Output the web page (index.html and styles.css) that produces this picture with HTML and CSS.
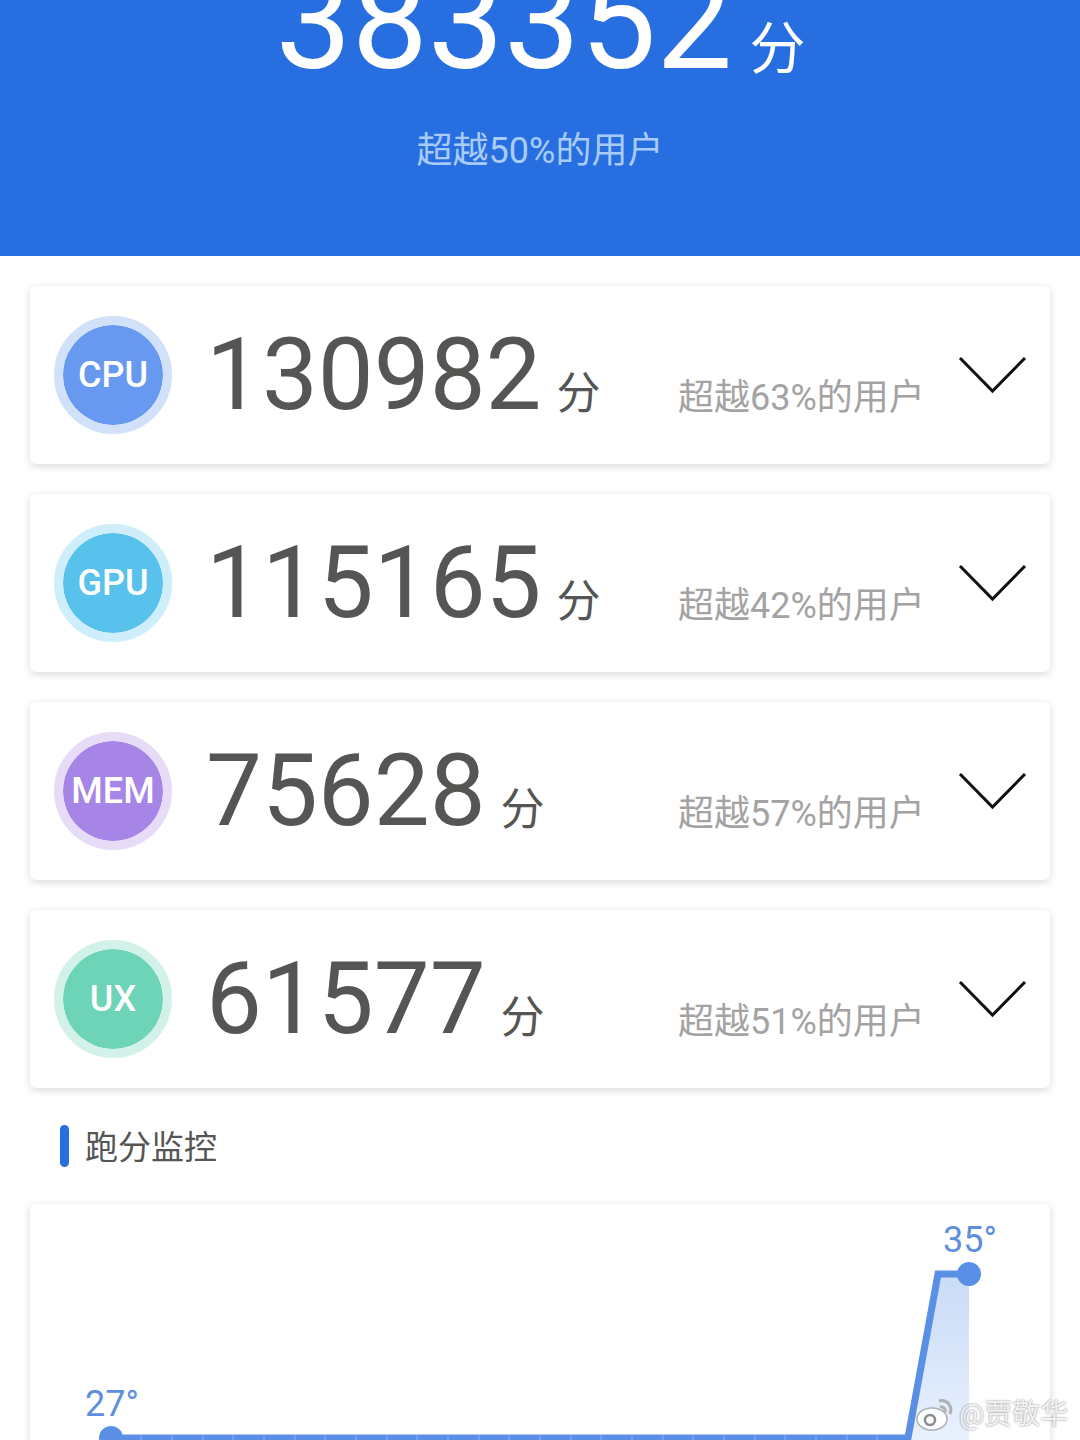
FILE: index.html
```html
<!doctype html>
<html lang="zh-CN">
  <head>
    <meta charset="UTF-8" />
    <title>跑分结果</title>
    <link rel="stylesheet" href="styles.css">
  </head>
  <body>
    <header class="hero">
      <div class="hero-score">383352<span class="hero-unit">分</span></div>
      <div class="hero-rank">超越50%的用户</div>
    </header>

    <main class="cards">
      <section class="card">
        <div class="badge badge-cpu">CPU</div>
        <div class="score">130982<span class="unit">分</span></div>
        <div class="rank">超越63%的用户</div>
        <svg class="chevron" width="70" height="40" viewBox="0 0 70 40"><path d="M2 2 L34.5 35 L67 2" /></svg>
      </section>
      <section class="card">
        <div class="badge badge-gpu">GPU</div>
        <div class="score">115165<span class="unit">分</span></div>
        <div class="rank">超越42%的用户</div>
        <svg class="chevron" width="70" height="40" viewBox="0 0 70 40"><path d="M2 2 L34.5 35 L67 2" /></svg>
      </section>
      <section class="card">
        <div class="badge badge-mem">MEM</div>
        <div class="score">75628<span class="unit">分</span></div>
        <div class="rank">超越57%的用户</div>
        <svg class="chevron" width="70" height="40" viewBox="0 0 70 40"><path d="M2 2 L34.5 35 L67 2" /></svg>
      </section>
      <section class="card">
        <div class="badge badge-ux">UX</div>
        <div class="score">61577<span class="unit">分</span></div>
        <div class="rank">超越51%的用户</div>
        <svg class="chevron" width="70" height="40" viewBox="0 0 70 40"><path d="M2 2 L34.5 35 L67 2" /></svg>
      </section>
    </main>

    <h3 class="section-title">跑分监控</h3>

    <section class="chart-card">
      <svg class="chart" width="1020" height="236" viewBox="0 0 1020 236">
        <defs>
          <linearGradient id="fill" x1="0" y1="0" x2="0" y2="1">
            <stop offset="0" stop-color="#c9dbf7" />
            <stop offset="1" stop-color="#e9f1fd" />
          </linearGradient>
        </defs>
        <path class="area" d="M878 232 L908 70 L939 70 L939 240 L878 240 Z" fill="url(#fill)" />
        <path class="line" d="M81 234 L878 234 L908 70 L939 70" />
        <path class="ticks" d="M111 230V236 M142 230V236 M173 230V236 M203 230V236 M234 230V236 M265 230V236 M295 230V236 M326 230V236 M357 230V236 M387 230V236 M418 230V236 M449 230V236 M479 230V236 M510 230V236 M541 230V236 M571 230V236 M602 230V236 M633 230V236 M663 230V236 M694 230V236 M725 230V236 M755 230V236 M786 230V236 M817 230V236 M847 230V236" />
        <circle class="dot" cx="81" cy="234" r="12" />
        <circle class="dot" cx="939" cy="70" r="12" />
        <text class="temp" x="55" y="212">27°</text>
        <text class="temp" x="913" y="48">35°</text>
      </svg>
    </section>

    <div class="watermark">
      <svg width="38" height="34" viewBox="0 0 38 34">
        <ellipse class="wm-body" cx="16" cy="21" rx="15" ry="11" />
        <circle class="wm-eye" cx="14" cy="22" r="5" />
        <path class="wm-wave" d="M23 3 C31 1 37 8 34 16 M24 9 C27 8 30 11 29 14" />
      </svg>
      <span>@贾敬华</span>
    </div>
  </body>
</html>
```

FILE: styles.css
```css
* {
  box-sizing: border-box;
}

body {
  margin: 0;
  height: 1440px;
  overflow: hidden;
  position: relative;
  background: #fff;
  font-family: Roboto, "Noto Sans CJK SC", sans-serif;
}

.hero {
  height: 256px;
  background: #276ee0;
  color: #fff;
  display: flex;
  flex-direction: column;
  justify-content: flex-end;
  align-items: center;
  overflow: hidden;
  padding-bottom: 85px;
}

.hero-score {
  font-size: 135.5px;
  font-weight: 400;
  line-height: 136px;
  white-space: nowrap;
  margin-left: 1px;
}

.hero-unit {
  font-size: 56px;
  margin-left: 17px;
}

.hero-rank {
  font-size: 36px;
  line-height: 40px;
  margin-top: 14px;
  color: #a9cbf8;
}

.cards {
  display: flex;
  flex-direction: column;
  gap: 30px;
  padding: 30px 30px 0;
}

.card {
  height: 178px;
  background: #fff;
  border-radius: 6px;
  box-shadow: 0 2px 8px rgba(0, 0, 0, 0.16);
  display: flex;
  align-items: center;
  padding-left: 24px;
  position: relative;
}

.badge {
  width: 118px;
  height: 118px;
  flex: none;
  border-radius: 50%;
  border: 9px solid;
  background-clip: padding-box;
  color: #fff;
  font-size: 36px;
  font-weight: 500;
  display: flex;
  align-items: center;
  justify-content: center;
}

.badge-cpu {
  background-color: #6799f0;
  border-color: #d2e1fa;
}

.badge-gpu {
  background-color: #58c2ec;
  border-color: #cdeefa;
}

.badge-mem {
  background-color: #a685e6;
  border-color: #e6dcf7;
}

.badge-ux {
  background-color: #6dd4b7;
  border-color: #d2f2e9;
}

.score {
  margin-left: 34px;
  margin-top: 19px;
  font-size: 99.5px;
  font-weight: 400;
  line-height: 100px;
  color: #555654;
  white-space: nowrap;
}

.unit {
  font-size: 44px;
  margin-left: 15px;
}

.rank {
  position: absolute;
  left: 648px;
  top: 90px;
  font-size: 36px;
  line-height: 44px;
  color: #a3a3a3;
  white-space: nowrap;
}

.chevron {
  position: absolute;
  left: 928px;
  top: 70px;
}

.chevron path {
  fill: none;
  stroke: #111;
  stroke-width: 3;
}

.section-title {
  margin: 37px 0 0 60px;
  padding-left: 25px;
  height: 42px;
  font-size: 33px;
  font-weight: 400;
  line-height: 46px;
  color: #555654;
  position: relative;
}

.section-title::before {
  content: "";
  position: absolute;
  left: 0;
  top: 0;
  width: 9px;
  height: 42px;
  border-radius: 5px;
  background: #276ee0;
}

.chart-card {
  margin: 37px 30px 0;
  height: 260px;
  background: #fff;
  border-radius: 6px;
  box-shadow: 0 2px 8px rgba(0, 0, 0, 0.16);
}

.chart {
  display: block;
}

.line {
  fill: none;
  stroke: #5a8fe6;
  stroke-width: 7;
}

.ticks {
  stroke: #8fb3ee;
  stroke-width: 1;
}

.dot {
  fill: #5a8fe6;
}

.temp {
  font-size: 36px;
  font-weight: 400;
  fill: #5f8fdc;
}

.watermark {
  position: absolute;
  left: 916px;
  top: 1397px;
  display: flex;
  align-items: center;
  gap: 5px;
  color: rgba(255, 255, 255, 0.9);
  font-size: 28px;
  line-height: 36px;
  white-space: nowrap;
  text-shadow: 0 0 2px rgba(0, 0, 0, 0.55);
}

.wm-body {
  fill: rgba(255, 255, 255, 0.92);
  stroke: rgba(130, 130, 130, 0.6);
  stroke-width: 1.5;
}

.wm-eye {
  fill: none;
  stroke: rgba(110, 110, 110, 0.8);
  stroke-width: 2.5;
}

.wm-wave {
  fill: none;
  stroke: rgba(170, 170, 170, 0.9);
  stroke-width: 3;
}
```
